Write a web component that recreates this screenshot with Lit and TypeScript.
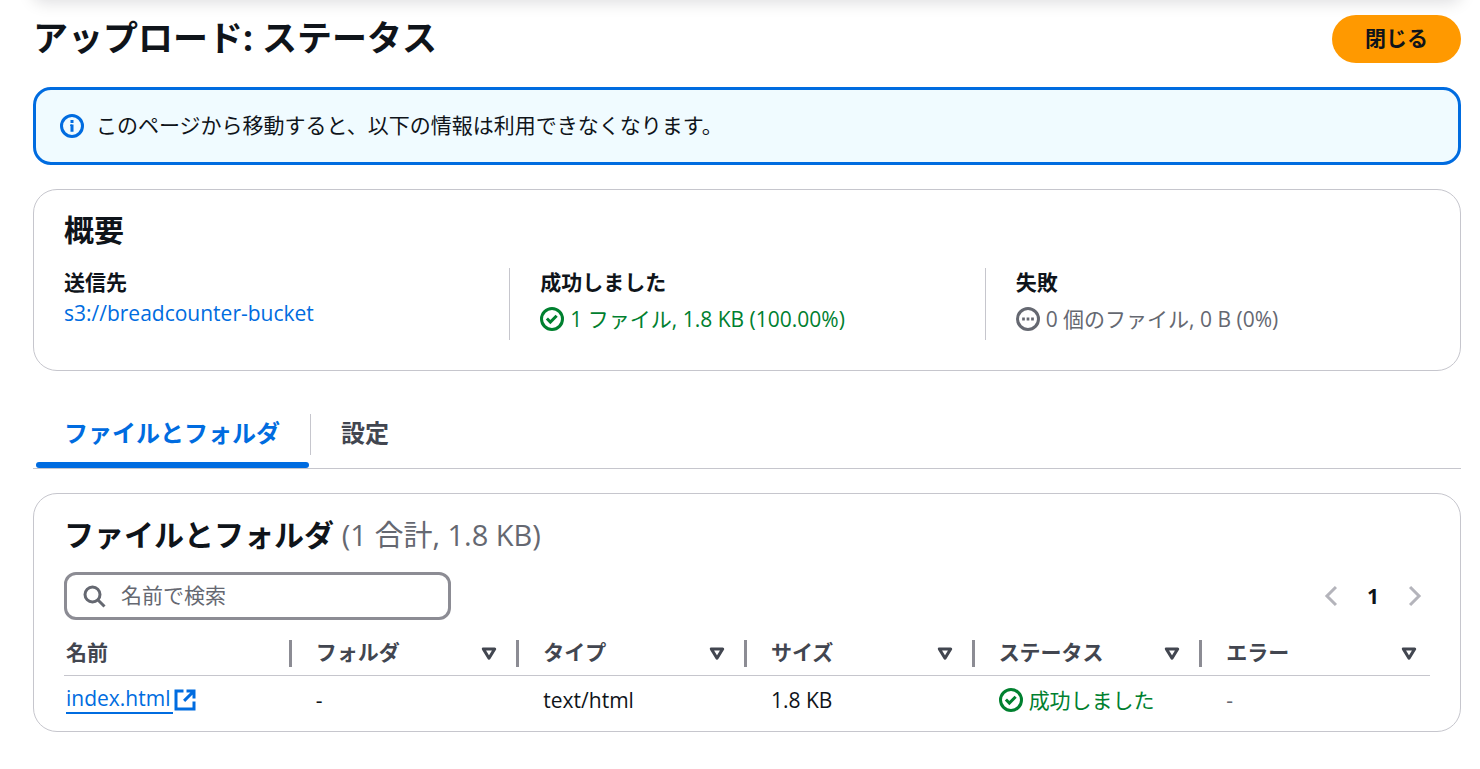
import { LitElement, html, css, svg } from "lit";
import { customElement, property, state } from "lit/decorators.js";
import { classMap } from "lit/directives/class-map.js";

const shapes: Record<string, unknown> = {
  info: svg`<circle cx="8" cy="8" r="7"/><path d="M8 7v4.8M8 4v2"/><path d="M6.8 7.5H8" stroke-width="1"/>`,
  success: svg`<circle cx="8" cy="8" r="7"/><path d="m4.6 7.7 2.3 2.4 4.2-4.3"/>`,
  pending: svg`<circle cx="8" cy="8" r="7"/><path d="M4.1 8h1.8M7.1 8h1.8M10.1 8h1.8"/>`,
  external: svg`<path d="M7 2H2v12h12V9M9 2h5v5M14 2 7.4 8.6"/>`,
  search: svg`<circle cx="7" cy="7" r="5"/><path d="m15 15-4.5-4.5"/>`,
  left: svg`<path d="M11.3 2 5.3 8l6 6"/>`,
  right: svg`<path d="m4.7 2 6 6-6 6"/>`,
  caret: svg`<path d="M4.2 4.6h7.6L8 10.8z" stroke-linejoin="round"/>`,
};

@customElement("ui-icon")
export class UiIcon extends LitElement {
  static styles = css`
    :host { display: inline-flex; flex: none; width: 24px; height: 24px; }
    .icon { width: 100%; height: 100%; fill: none; stroke: currentColor; stroke-width: 2; }
  `;
  @property() name = "info";
  render() {
    return html`<svg class="icon" viewBox="0 0 16 16" aria-hidden="true">${shapes[this.name]}</svg>`;
  }
}

@customElement("app-root")
export class AppRoot extends LitElement {
  static styles = css`
    :host {
      display: block;
      color: #0f141a;
      background: #fff;
      font: 21px/30px "Open Sans", "Noto Sans CJK JP", sans-serif;
    }
    * { box-sizing: border-box; }
    h1, h2, p, dl, dd { margin: 0; }
    button, input { font: inherit; color: inherit; }
    button { border: 0; background: none; padding: 0; cursor: pointer; }
    a { color: #006ce0; text-decoration: none; }
    .page { padding: 0 19px 36px 33px; overflow: hidden; }
    .edge { height: 24px; margin: -24px 0 0; box-shadow: 0 2px 16px 1px rgba(0, 7, 22, 0.13); border-radius: 24px; }
    .top { display: flex; justify-content: space-between; align-items: flex-start; padding-top: 15px; }
    h1 { font-size: 35px; line-height: 46px; font-weight: 700; }
    h2 { font-size: 30px; line-height: 36px; font-weight: 700; }
    .close { height: 48px; padding: 0 33px 2px; border-radius: 24px; background: #ff9900; font-weight: 700; }
    .alert {
      display: flex; align-items: center; gap: 12px; margin-top: 24px; padding: 21px 24px;
      border: 3px solid #006ce0; border-radius: 18px; background: #f0fbff;
    }
    .alert ui-icon { color: #006ce0; }
    .alert p { padding-bottom: 2px; line-height: 28px; }
    .card { border: 1px solid #c6c6cd; border-radius: 24px; margin-top: 24px; }
    .title { padding: 22px 30px 0; }
    .facts { display: grid; grid-template-columns: repeat(3, 1fr); margin-top: 20px; padding-bottom: 30px; }
    .fact { padding: 0 30px; height: 72px; }
    .fact + .fact { border-left: 1px solid #c6c6cd; }
    .fact dt { font-weight: 700; line-height: 28px; padding-bottom: 2px; }
    .status { display: flex; align-items: center; gap: 6px; color: #00802f; }
    .fact .status { padding-top: 6px; }
    .muted, .fact .muted { color: #656871; }
    .tabs { display: flex; margin-top: 36px; border-bottom: 1px solid #c6c6cd; }
    .tab { position: relative; height: 61px; padding: 0 30px 10px; font-size: 24px; font-weight: 700; color: #424650; }
    .tab.active { color: #006ce0; padding-left: 31px; }
    .tab.active::after {
      content: ""; position: absolute; left: 3px; right: 1px; bottom: 0; height: 6px;
      border-radius: 3px; background: #006ce0;
    }
    .rule { width: 1px; height: 41px; margin-top: 7px; background: #c6c6cd; }
    .files { padding: 23px 30px 7px; }
    .count { font-size: 29px; font-weight: 400; color: #656871; }
    .tools { display: flex; justify-content: space-between; align-items: center; margin-top: 19px; }
    .search {
      display: flex; align-items: center; gap: 15px; width: 387px; height: 48px; padding: 0 15px;
      border: 3px solid #8c8c94; border-radius: 12px; color: #656871;
    }
    .search input { flex: 1; min-width: 0; border: 0; outline: 0; padding: 0 0 2px; background: none; }
    .search input::placeholder { color: #656871; opacity: 1; }
    .pager { display: flex; align-items: center; gap: 12px; padding-right: 3px; }
    .pager button { display: flex; align-items: center; justify-content: center; width: 30px; height: 30px; }
    .pager .step { width: 24px; color: #b4b4bb; }
    .pager .current { font-weight: 700; width: 36px; }
    table { width: 100%; table-layout: fixed; border-collapse: collapse; margin-top: 12px; }
    th { height: 43px; padding: 0; border-bottom: 1px solid #c6c6cd; text-align: left; color: #424650; }
    .head { display: flex; align-items: center; justify-content: space-between; height: 27px; padding: 0 15px 0 24px; border-right: 3px solid #8c8c94; }
    .head span { padding-bottom: 3px; }
    .head ui-icon { margin-top: 2px; }
    th:first-child .head, td:first-child { padding-left: 2px; }
    th:last-child .head { border: 0; padding-right: 9px; }
    td { height: 49px; padding: 0 0 0 24px; }
    .file { display: flex; align-items: center; }
    .file .text { border-bottom: 2px solid #006ce0; line-height: 27px; padding-right: 3px; }
  `;

  @state() private tab = 0;
  private tabs = ["ファイルとフォルダ", "設定"];
  private columns = ["名前", "フォルダ", "タイプ", "サイズ", "ステータス", "エラー"];

  render() {
    return html`
      <main class="page">
        <div class="edge"></div>
        <header class="top">
          <h1>アップロード: ステータス</h1>
          <button class="close">閉じる</button>
        </header>
        <div class="alert" role="status">
          <ui-icon name="info"></ui-icon>
          <p>このページから移動すると、以下の情報は利用できなくなります。</p>
        </div>
        <section class="card">
          <h2 class="title">概要</h2>
          <dl class="facts">
            <div class="fact"><dt>送信先</dt><dd><a href="#">s3://breadcounter-bucket</a></dd></div>
            <div class="fact"><dt>成功しました</dt><dd class="status"><ui-icon name="success"></ui-icon>1 ファイル, 1.8 KB (100.00%)</dd></div>
            <div class="fact"><dt>失敗</dt><dd class="status muted"><ui-icon name="pending"></ui-icon>0 個のファイル, 0 B (0%)</dd></div>
          </dl>
        </section>
        <nav class="tabs" role="tablist">
          ${this.tabs.map((t, i) => html`
            ${i ? html`<span class="rule"></span>` : ""}
            <button role="tab" aria-selected=${this.tab === i} class=${classMap({ tab: true, active: this.tab === i })}
              @click=${() => (this.tab = i)}>${t}</button>`)}
        </nav>
        <section class="card files">
          <h2>ファイルとフォルダ <span class="count">(1 合計, 1.8 KB)</span></h2>
          <div class="tools">
            <label class="search"><ui-icon name="search"></ui-icon>
              <input type="text" placeholder="名前で検索" aria-label="名前で検索" /></label>
            <div class="pager">
              <button class="step" aria-label="前のページ" disabled><ui-icon name="left"></ui-icon></button>
              <button class="current">1</button>
              <button class="step" aria-label="次のページ" disabled><ui-icon name="right"></ui-icon></button>
            </div>
          </div>
          <table>
            <thead><tr>${this.columns.map((c, i) => html`
              <th scope="col"><div class="head"><span>${c}</span>${i ? html`<ui-icon name="caret"></ui-icon>` : ""}</div></th>`)}
            </tr></thead>
            <tbody><tr>
              <td><a class="file" href="#"><span class="text">index.html</span><ui-icon name="external"></ui-icon></a></td>
              <td>-</td>
              <td>text/html</td>
              <td>1.8 KB</td>
              <td><span class="status"><ui-icon name="success"></ui-icon>成功しました</span></td>
              <td class="muted">-</td>
            </tr></tbody>
          </table>
        </section>
      </main>
    `;
  }
}
